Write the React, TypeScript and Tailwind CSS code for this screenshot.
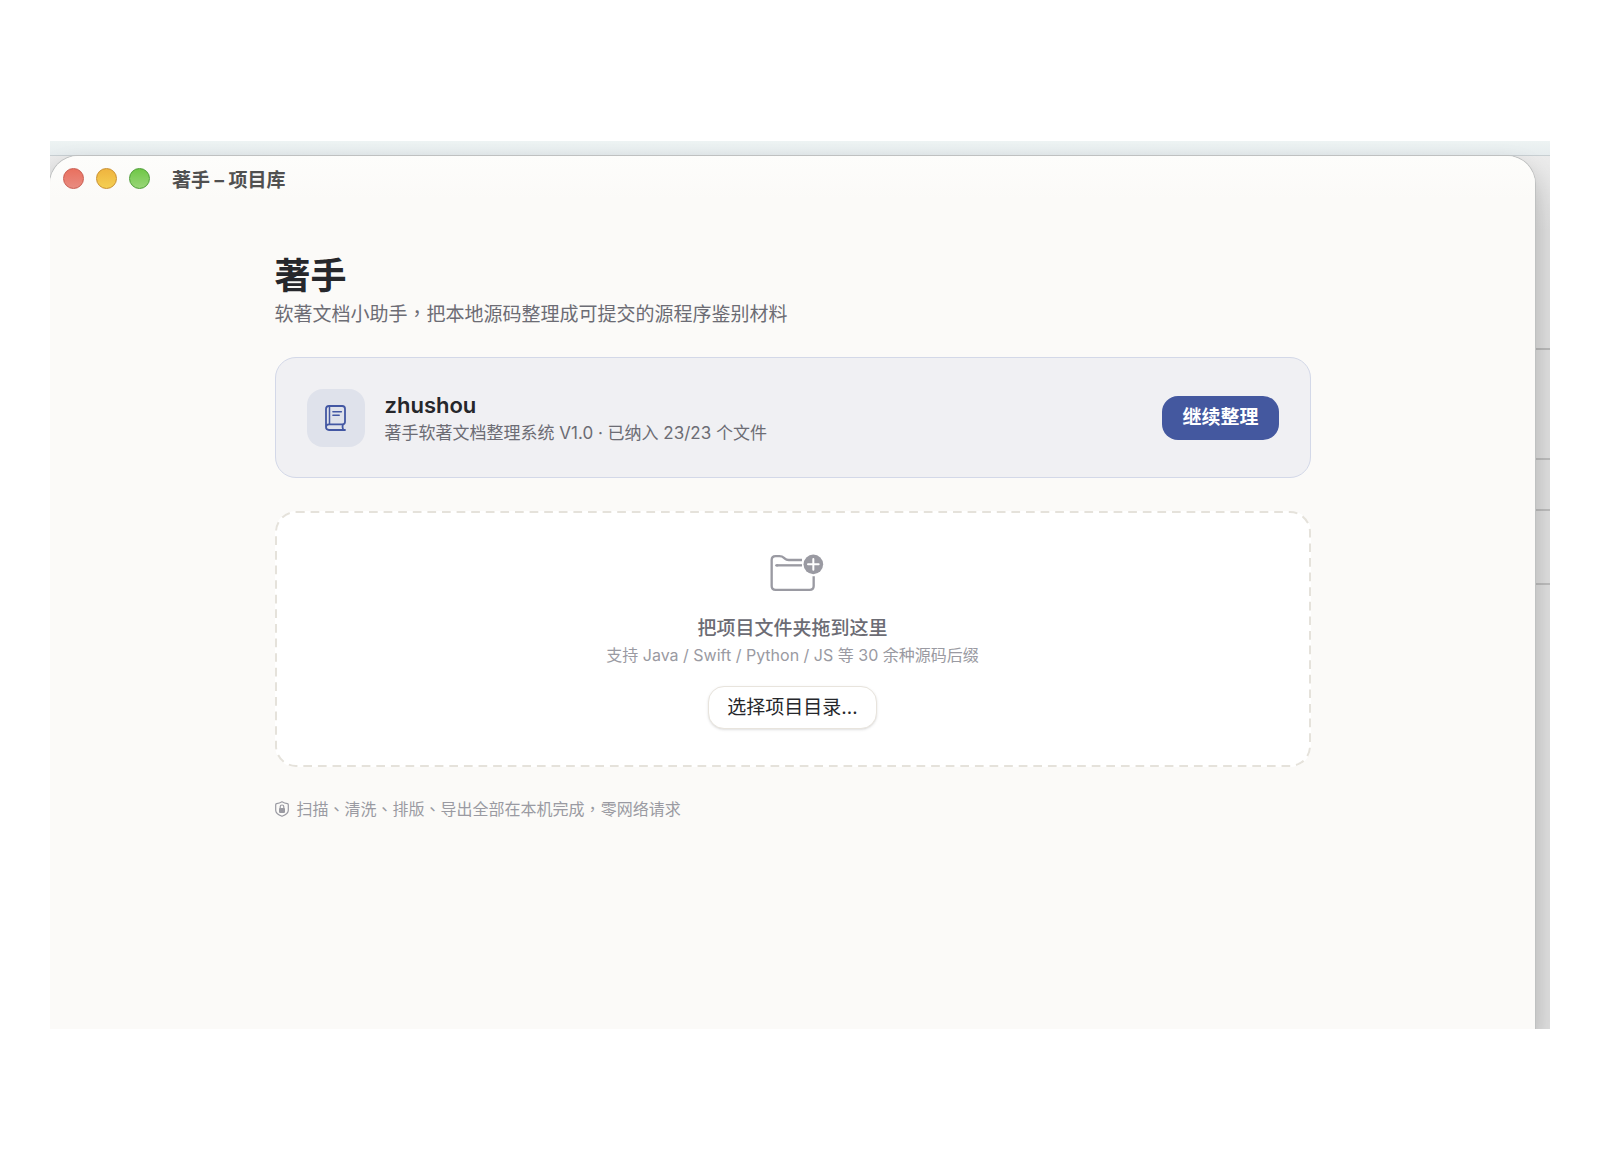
import type { ReactNode } from "react";

const trafficLights = [
  { label: "关闭", style: "border-[#c9594d] bg-linear-to-b from-[#e9705f] to-[#e88b80]" },
  { label: "最小化", style: "border-[#c98e2b] bg-linear-to-b from-[#efb43f] to-[#f4cf52]" },
  { label: "缩放", style: "border-[#4a9c33] bg-linear-to-b from-[#6fc746] to-[#98d677]" },
];

// Punctuation sits in the middle of its cell, as in the traditional typefaces
function Mark({ children }: { children: ReactNode }) {
  return <span className="font-['Noto_Sans_CJK_TC',sans-serif]">{children}</span>;
}

function BookIcon() {
  return (
    <svg
      className="h-[26px] w-[21px]"
      viewBox="0 0 21 26"
      fill="none"
      stroke="#4357a3"
      strokeWidth="1.8"
      strokeLinecap="round"
      strokeLinejoin="round"
      aria-hidden="true"
    >
      <path d="M1 22V4Q1 1 4 1H17.2Q20 1 20 3.8V16.8Q20 19.3 17.6 19.3H4Q1 19.3 1 22.1Q1 25 4 25H20" />
      <path d="M4.5 1.4V19" strokeWidth="1.5" />
      <path d="M17.8 19.6Q17 22.2 18.2 24.8" />
      <path d="M7.9 6.7H16.4M7.9 10.2H14.2" strokeWidth="1.5" />
    </svg>
  );
}

function FolderPlusIcon() {
  return (
    <svg className="ml-2 h-[38px] w-[54px]" viewBox="90 44 162 114" fill="none" aria-hidden="true">
      <g stroke="#9a9aa2" strokeWidth="7" strokeLinejoin="round">
        <path d="M186 62H146C139 62 136 59 132 55.5C127 51 124 50.5 118 50.5H107Q95 50.5 95 62V140Q95 151.500 107 151.500H209Q221 151.500 221 140V111" />
        <path d="M109 78H186" />
        <path d="M109 78H112" strokeLinecap="round" />
      </g>
      <circle cx="220" cy="75" r="29.500" fill="#9a9aa2" />
      <path d="M220 59V91M204 75H236" stroke="#fff" strokeWidth="6" strokeLinecap="round" />
    </svg>
  );
}

function ShieldLockIcon() {
  return (
    <svg className="h-4 w-[14px]" viewBox="0 0 14 16" fill="none" aria-hidden="true">
      <path
        d="M7 .8Q9.500 2.200 12.400 2.700Q13.300 2.900 13.300 3.800V9.200Q13.300 12.900 7 15.300Q.7 12.900 .7 9.200V3.800Q.7 2.900 1.600 2.700Q4.500 2.200 7 .8Z"
        stroke="#9a9aa2"
        strokeWidth="1.2"
        strokeLinejoin="round"
      />
      <rect x="4" y="7" width="6" height="4.900" rx=".8" fill="#9a9aa2" />
      <path d="M5.200 7.200V5.800Q5.200 4 7 4Q8.800 4 8.800 5.800V7.200" stroke="#9a9aa2" strokeWidth="1.2" />
    </svg>
  );
}

function Backdrop() {
  return (
    <div className="absolute inset-0 flex flex-col bg-[#dedede]" aria-hidden="true">
      <div className="h-[14px] bg-linear-to-b from-[#edf3f3] to-[#e6ecee]" />
      <div className="h-[76px] border-t border-[#c8cfd2] bg-linear-to-b from-[#ebebeb] to-[#dedede]" />
      <div className="h-[119px] border-b-2 border-[#b9b9b9]" />
      <div className="h-[110px] border-b-2 border-[#bcbcbc]" />
      <div className="h-[51px] border-b-2 border-[#bcbcbc]" />
      <div className="h-[74px] border-b-2 border-[#bcbcbc]" />
    </div>
  );
}

export default function App() {
  return (
    <div className="flex min-h-screen flex-col bg-white px-[50px] pt-[141px] pb-[142px] font-['Inter','Noto_Sans_CJK_SC',sans-serif]">
      <div className="relative flex flex-1 flex-col overflow-hidden">
        <Backdrop />

        <div className="relative mt-[15px] mr-[15px] flex flex-1 flex-col rounded-t-[28px] bg-[#fbfaf8] shadow-[0_0_0_1px_#bfc1c1,0_12px_24px_rgba(0,0,0,0.22)]">
          <header className="flex h-11 items-center rounded-t-[28px] bg-linear-to-b from-[#fdfdfb] to-[#fbfaf8] pl-[13px]">
            <div className="flex gap-3">
              {trafficLights.map((light) => (
                <button
                  key={light.label}
                  type="button"
                  aria-label={light.label}
                  className={`size-[21px] rounded-full border ${light.style}`}
                />
              ))}
            </div>
            <span className="ml-[22px] pt-[5px] text-[19px] leading-6 font-bold text-[#505050]">著手 – 项目库</span>
          </header>

          <main className="mx-auto w-full max-w-[1036px] pt-[53px]">
            <h1 className="text-[36px] leading-[46px] font-bold text-[#26272b]">著手</h1>
            <p className="mt-[2px] text-[19px] leading-6 text-[#6c6c74]">
              软著文档小助手<Mark>，</Mark>把本地源码整理成可提交的源程序鉴别材料
            </p>

            <section className="mt-[30px] flex items-center gap-5 rounded-[21px] border border-[#d3d8e8] bg-[#f0f0f3] px-[31px] py-[30px]">
              <div className="flex size-[58px] items-center justify-center rounded-2xl bg-[#dfe2eb]">
                <BookIcon />
              </div>
              <div className="flex-1 pt-[3px]">
                <h2 className="text-[22px] leading-7 font-semibold text-[#26272b]">zhushou</h2>
                <p className="text-[17px] leading-7 text-[#6c6c74]">著手软著文档整理系统 V1.0 · 已纳入 23/23 个文件</p>
              </div>
              <button
                type="button"
                className="h-11 rounded-2xl bg-[#44589f] px-5 text-[19px] leading-6 font-bold text-white"
              >
                继续整理
              </button>
            </section>

            <section className="relative mt-[33px] flex flex-col items-center rounded-[21px] bg-white pt-[43px] pb-[38px]">
              <svg className="absolute inset-px size-[calc(100%-2px)] overflow-visible" aria-hidden="true">
                <rect
                  width="100%"
                  height="100%"
                  rx="20"
                  fill="none"
                  stroke="#e5e2db"
                  strokeWidth="2"
                  strokeDasharray="8.700 5.900"
                />
              </svg>
              <FolderPlusIcon />
              <h2 className="mt-[23px] text-[19px] leading-7 font-medium text-[#6c6c74]">把项目文件夹拖到这里</h2>
              <p className="text-[16px] leading-6 text-[#9a9aa2]">
                支持 Java / Swift / Python / JS 等 30 余种源码后缀
              </p>
              <button
                type="button"
                className="relative mt-[19px] h-[43px] rounded-2xl border border-[#e8e4dd] bg-white px-[18px] text-[19px] leading-6 text-[#26272b] shadow-sm"
              >
                选择项目目录…
              </button>
            </section>

            <p className="mt-[29px] flex items-center gap-2 text-[16px] leading-6 text-[#9a9aa2]">
              <ShieldLockIcon />
              <span>
                扫描<Mark>、</Mark>清洗<Mark>、</Mark>排版<Mark>、</Mark>导出全部在本机完成<Mark>，</Mark>零网络请求
              </span>
            </p>
          </main>
        </div>
      </div>
    </div>
  );
}
